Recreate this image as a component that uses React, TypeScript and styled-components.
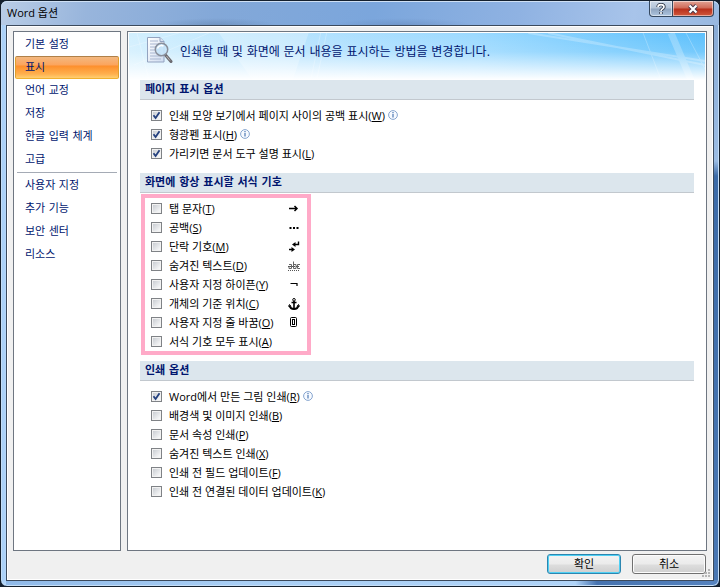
import React, { useState } from "react";
import styled, { createGlobalStyle, css } from "styled-components";

const GlobalStyle = createGlobalStyle`
  * { box-sizing: border-box; }
  body {
    margin: 0;
    background: #14202e;
    font-family: "Open Sans", "Noto Sans CJK KR", sans-serif;
    font-size: 11px;
    line-height: 19px;
    color: #000;
  }
  button, input { font: inherit; }
`;

const headingFont = `"DejaVu Sans", "Noto Sans CJK KR", sans-serif`;

const Frame = styled.div`
  display: flex;
  flex-direction: column;
  min-height: 100vh;
  padding: 0 5px 5px;
  border: 1px solid #14202e;
  border-radius: 7px;
  background:
    linear-gradient(to right, #a5cdf5 0, #b3d6fa 5px, transparent 5px),
    linear-gradient(to right, #8fb9e8 0%, #a9cff5 34%, #b0d4f8 80%, #4673b0 83%, #5583bf 100%) bottom / 100% 6px no-repeat,
    linear-gradient(to bottom, #86a9d4 0, #9bbce3 160px, #3c6ba8 175px, #4a78b4 100%);
  box-shadow: inset 0 0 0 1px #c5def7;
`;

const TitleBar = styled.header`
  display: flex;
  height: 24px;
  margin: 0 -5px;
  padding: 0 5px 0 6px;
  border-radius: 6px 6px 0 0;
  justify-content: space-between;
  align-items: flex-start;
  background:
    radial-gradient(ellipse 60px 7px at 30% 100%, rgba(80, 110, 150, 0.35), transparent),
    radial-gradient(ellipse 70px 7px at 56% 100%, rgba(80, 110, 160, 0.3), transparent),
    linear-gradient(100deg, #b9cde6 0%, #98b5dc 12%, #83a8d8 30%, #7ba6dc 52%, #8fb2e2 72%, #a8c4ea 88%, #98b8e0 100%);
  box-shadow: inset 0 1px 0 #cfe0f4;
`;

const Title = styled.h1`
  margin: 0;
  font-size: 11px;
  font-weight: 400;
  line-height: 24px;
`;

const CaptionButtons = styled.div`
  display: flex;
`;

const CaptionButton = styled.button<{ $close?: boolean }>`
  display: flex;
  align-items: center;
  justify-content: center;
  width: ${(p) => (p.$close ? 41 : 24)}px;
  height: 16px;
  padding: 0;
  border: 1px solid #35485f;
  border-top: 0;
  box-shadow: inset 0 0 0 1px rgba(255, 255, 255, 0.5);
  ${(p) =>
    p.$close
      ? css`
          border-radius: 0 0 4px 0;
          border-left: 0;
          background: linear-gradient(#e2a395 0, #cf6a58 7px, #b8301c 8px, #d0583c 100%);
        `
      : css`
          border-radius: 0 0 0 4px;
          background: linear-gradient(#cbd8e8 0, #b3c4d8 7px, #8fa5c0 8px, #adc4df 100%);
        `}
`;

const Body = styled.div`
  position: relative;
  display: flex;
  flex: 1;
  flex-direction: column;
  padding: 5px 6px;
  border: 1px solid #3c4a5c;
  background: #f0f0f0;
  box-shadow: inset 0 0 0 1px #fff;
`;

const ResizeGrip = styled.svg`
  position: absolute;
  right: 2px;
  bottom: 2px;
`;

const Columns = styled.div`
  display: flex;
  flex: 1;
  gap: 6px;
`;

const Sidebar = styled.nav`
  flex: 0 0 108px;
  padding: 1px;
  border: 1px solid #6e7681;
  background: #fff;
  font-family: ${headingFont};
`;

const NavButton = styled.button<{ $active?: boolean }>`
  display: block;
  width: 100%;
  height: 23px;
  padding: 0 9px;
  border: 1px solid transparent;
  border-radius: 2px;
  background: transparent;
  color: #00156e;
  line-height: 21px;
  text-align: left;
  ${(p) =>
    p.$active &&
    css`
      border-color: #b08048 #e0a02c #f0b030;
      background: linear-gradient(#f3b880 0, #fca45c 8px, #fd8f2c 9px, #ffb04e 17px, #ffcf70 100%);
    `}
`;

const Divider = styled.hr`
  height: 1px;
  margin: 1px 2px;
  border: 0;
  background: #a5abb5;
`;

const Panel = styled.main`
  flex: 1;
  min-width: 0;
  padding: 1px;
  border: 1px solid #6e7681;
  background: #fff;
`;

const Banner = styled.div`
  display: grid;
  height: 47px;
  > * { grid-area: 1 / 1; }
`;

const BannerArt = styled.svg`
  width: 100%;
  height: 47px;
`;

const BannerContent = styled.div`
  display: flex;
  align-items: flex-start;
  gap: 7px;
  padding: 3px 17px;
`;

const BannerText = styled.h2`
  margin: 0;
  padding-top: 6px;
  color: #00156e;
  font-family: ${headingFont};
  font-size: 12px;
  font-weight: 400;
  line-height: 20px;
`;

const Sections = styled.div`
  padding: 0 11px;
`;

const SectionTitle = styled.h3`
  height: 20px;
  margin: 0;
  padding: 0 5px;
  border-bottom: 1px solid #c2c8ce;
  background: #dce6ed;
  color: #00156e;
  font-family: ${headingFont};
  font-size: 11px;
  font-weight: 700;
  line-height: 19px;
`;

const OptionList = styled.div<{ $marked?: boolean }>`
  padding: 6px 11px 10px;
  ${(p) =>
    p.$marked &&
    css`
      width: 170px;
      margin: 1px 1px 6px;
      padding: 1px 6px 0;
      border: 4px solid #ffaac8;
    `}
`;

const OptionRow = styled.div`
  display: flex;
  align-items: center;
  height: 19px;
`;

const OptionLabel = styled.label`
  display: flex;
  align-items: center;
  gap: 7px;
  white-space: nowrap;
`;

const TickBox = styled.span`
  display: grid;
  width: 11px;
  height: 11px;
  > * { grid-area: 1 / 1; }
  > svg { pointer-events: none; }
`;

const TickInput = styled.input`
  width: 11px;
  height: 11px;
  margin: 0;
  border: 1px solid #7f8286;
  appearance: none;
  background: linear-gradient(135deg, #c3c7cd, #f4f5f6 80%);
  box-shadow: inset 0 0 0 1px #f2f2f2;
`;

const SymbolCell = styled.span`
  display: flex;
  justify-content: center;
  width: 14px;
  margin-left: auto;
`;

const InfoIcon = styled.svg`
  margin: 0 0 2px 3px;
`;

const Footer = styled.footer`
  display: flex;
  justify-content: flex-end;
  gap: 11px;
  padding: 3px 1px 1px 0;
`;

const DialogButton = styled.button<{ $primary?: boolean }>`
  width: 74px;
  height: 20px;
  padding: 0;
  border: 1px solid ${(p) => (p.$primary ? "#2c86b0" : "#707070")};
  border-radius: 3px;
  background: linear-gradient(#f3f3f3 0, #ebebeb 9px, #dddddd 10px, #cfcfcf 100%);
  box-shadow: inset 0 0 0 1px ${(p) => (p.$primary ? "#4fd0f4" : "#fcfcfc")};
  color: #000;
  line-height: 18px;
`;

const symbols: Record<string, React.ReactNode> = {
  tab: <path d="M2 5.500h7M7.500 3 10 5.500 7.500 8" fill="none" stroke="#000" strokeWidth="1.500" />,
  space: <path d="M2.500 5h2v2h-2zM6 5h2v2H6zM9.500 5h2v2h-2z" />,
  paragraph: (
    <>
      <path d="M11.500.5v3H7" fill="none" stroke="#000" strokeWidth="1.400" />
      <path d="M8.500 1 5 3.500 8.500 6zM4.500 6 8 8.500 4.500 11z" />
      <path d="M2 8.500h4" stroke="#000" strokeWidth="1.500" />
    </>
  ),
  hidden: (
    <>
      <path
        d="M2 4.500h2.500v4H2v-2h2.500M6.500 1.500v7H9v-4H6.500M13 4.500h-2.500v4H13"
        fill="none"
        stroke="#666"
      />
      <path d="M1 6.500h12M1 10.500h12" stroke="#555" strokeDasharray="1 1" />
    </>
  ),
  hyphen: <path d="M3.500 4.500H10V7" fill="none" stroke="#000" strokeWidth="1.200" />,
  anchor: (
    <g fill="none" stroke="#000">
      <circle cx="7" cy="1.800" r="1.300" />
      <path d="M7 3v8M4.500 4.500h5" strokeWidth="1.600" />
      <path d="M2.500 7.500C3 10 5 11 7 11s4-1 4.500-3.500" strokeWidth="1.800" />
      <path d="M1.500 8.500l1-2 1.500 2M10 8.500l1.500-2 1 2" />
    </g>
  ),
  box: (
    <g fill="none" stroke="#000">
      <rect x="3.500" y=".5" width="6" height="9" rx="1" />
      <rect x="5.500" y="2.500" width="2" height="5" />
    </g>
  ),
};

const Info = () => (
  <InfoIcon width="10" height="10" viewBox="0 0 10 10" role="img" aria-label="정보">
    <circle cx="5" cy="5" r="4.400" fill="#f7faff" stroke="#7b9cc9" strokeWidth=".9" />
    <path d="M5 2v1.200M5 4v3.500" stroke="#3f6cab" strokeWidth="1.100" />
  </InfoIcon>
);

type OptionData = { text: string; hotkey: string; checked?: boolean; info?: boolean; symbol?: string };

function Option({ text, hotkey, checked = false, info, symbol }: OptionData) {
  const [on, setOn] = useState(checked);
  return (
    <OptionRow>
      <OptionLabel>
        <TickBox>
          <TickInput type="checkbox" checked={on} onChange={() => setOn(!on)} />
          {on && (
            <svg width="11" height="11" viewBox="0 0 11 11">
              <path d="M2.500 5.200 4.600 8 8.500 2.300" fill="none" stroke="#24407e" strokeWidth="1.800" />
            </svg>
          )}
        </TickBox>
        <span>
          {text}(<u>{hotkey}</u>)
        </span>
      </OptionLabel>
      {info && <Info />}
      {symbol && (
        <SymbolCell>
          <svg width="14" height="12" viewBox="0 0 14 12" aria-hidden="true">{symbols[symbol]}</svg>
        </SymbolCell>
      )}
    </OptionRow>
  );
}

const sections: { title: string; marked?: boolean; options: OptionData[] }[] = [
  {
    title: "페이지 표시 옵션",
    options: [
      { text: "인쇄 모양 보기에서 페이지 사이의 공백 표시", hotkey: "W", checked: true, info: true },
      { text: "형광펜 표시", hotkey: "H", checked: true, info: true },
      { text: "가리키면 문서 도구 설명 표시", hotkey: "L", checked: true },
    ],
  },
  {
    title: "화면에 항상 표시할 서식 기호",
    marked: true,
    options: [
      { text: "탭 문자", hotkey: "T", symbol: "tab" },
      { text: "공백", hotkey: "S", symbol: "space" },
      { text: "단락 기호", hotkey: "M", symbol: "paragraph" },
      { text: "숨겨진 텍스트", hotkey: "D", symbol: "hidden" },
      { text: "사용자 지정 하이픈", hotkey: "Y", symbol: "hyphen" },
      { text: "개체의 기준 위치", hotkey: "C", symbol: "anchor" },
      { text: "사용자 지정 줄 바꿈", hotkey: "O", symbol: "box" },
      { text: "서식 기호 모두 표시", hotkey: "A" },
    ],
  },
  {
    title: "인쇄 옵션",
    options: [
      { text: "Word에서 만든 그림 인쇄", hotkey: "R", checked: true, info: true },
      { text: "배경색 및 이미지 인쇄", hotkey: "B" },
      { text: "문서 속성 인쇄", hotkey: "P" },
      { text: "숨겨진 텍스트 인쇄", hotkey: "X" },
      { text: "인쇄 전 필드 업데이트", hotkey: "F" },
      { text: "인쇄 전 연결된 데이터 업데이트", hotkey: "K" },
    ],
  },
];

const mainPages = ["기본 설정", "표시", "언어 교정", "저장", "한글 입력 체계", "고급"];
const extraPages = ["사용자 지정", "추가 기능", "보안 센터", "리소스"];

const DocumentIcon = () => (
  <svg width="27" height="28" viewBox="0 0 27 28" aria-hidden="true">
    <defs>
      <linearGradient id="sheet" x1="0" y1="0" x2="1" y2="1">
        <stop offset="0" stopColor="#fff" />
        <stop offset="1" stopColor="#cfdcf0" />
      </linearGradient>
    </defs>
    <path d="M1.500 1.500H14l4 4V26H1.500z" fill="url(#sheet)" stroke="#93a3c0" />
    <path d="M14 1.500v4h4" fill="#dbe4f2" stroke="#93a3c0" />
    <path d="M4 5h8M4 8h11M4 11h11M4 14h11M4 17h11M4 20h11M4 23h11" stroke="#a9b6d0" />
    <path d="m19.500 19 5.500 6.500" stroke="#6c6a70" strokeWidth="3" strokeLinecap="round" />
    <path d="m20.500 20 3.500 4.500" stroke="#b9b3b0" strokeWidth="1" />
    <circle cx="15.500" cy="13.500" r="6.200" fill="#c6e4fa" fillOpacity=".9" stroke="#8a8f9b" strokeWidth="1.500" />
    <path d="M11.500 12.500a4.200 4.200 0 0 1 6-2.500" fill="none" stroke="#fff" strokeWidth="1.500" />
  </svg>
);

export default function App() {
  const [page, setPage] = useState("표시");
  const nav = (name: string) => (
    <NavButton key={name} type="button" $active={page === name} onClick={() => setPage(name)}>
      {name}
    </NavButton>
  );
  return (
    <>
      <GlobalStyle />
      <Frame>
        <TitleBar>
          <Title>Word 옵션</Title>
          <CaptionButtons>
            <CaptionButton type="button" aria-label="도움말">
              <svg width="10" height="12" viewBox="0 0 10 12">
                <path d="M2 4C2 .8 8 .8 8 4c0 2-3 1.800-3 4M5 9v2" fill="none" stroke="#333c4c" strokeWidth="3.400" />
                <path d="M2 4C2 .8 8 .8 8 4c0 2-3 1.800-3 4M5 9v2" fill="none" stroke="#fff" strokeWidth="1.600" />
              </svg>
            </CaptionButton>
            <CaptionButton type="button" $close aria-label="닫기">
              <svg width="12" height="10" viewBox="0 0 12 10">
                <path d="m2.500 1.500 7 7m0-7-7 7" stroke="#47384a" strokeWidth="4" />
                <path d="m2.500 1.500 7 7m0-7-7 7" stroke="#fff" strokeWidth="2.200" />
              </svg>
            </CaptionButton>
          </CaptionButtons>
        </TitleBar>
        <Body>
          <Columns>
            <Sidebar>
              {mainPages.map(nav)}
              <Divider />
              {extraPages.map(nav)}
            </Sidebar>
            <Panel>
              <Banner>
                <BannerArt viewBox="0 0 577 47" preserveAspectRatio="none" aria-hidden="true">
                  <defs>
                    <linearGradient id="sky" x1="0" x2="1" y1="0" y2="0">
                      <stop offset="0" stopColor="#d2effe" />
                      <stop offset=".3" stopColor="#b4e2fe" />
                      <stop offset=".6" stopColor="#9bd9ff" />
                      <stop offset="1" stopColor="#5cc0fc" />
                    </linearGradient>
                    <linearGradient id="fade" x1="0" x2="0" y1="0" y2="1">
                      <stop offset="0" stopColor="#fff" stopOpacity="0" />
                      <stop offset=".4" stopColor="#fff" stopOpacity=".15" />
                      <stop offset="1" stopColor="#fff" />
                    </linearGradient>
                  </defs>
                  <path d="M0 0h577v47H0z" fill="url(#sky)" />
                  <path d="M90 0h90l-16 47h-40z" fill="#fff" opacity=".25" />
                  <g fill="none" stroke="#fff" opacity=".25">
                    <path d="M420 0 577 32M400 0 577 28" strokeWidth="2" />
                    <path d="m515 0 18 47M558 0l19 36M192 0l-10 47M198 0l-10 47M0 14 50 0M5 32 80 0M20 47 8 0" />
                    <path d="m543 0 20 47" strokeWidth="7" />
                  </g>
                  <path d="M0 0h577v47H0z" fill="url(#fade)" />
                </BannerArt>
                <BannerContent>
                  <DocumentIcon />
                  <BannerText>인쇄할 때 및 화면에 문서 내용을 표시하는 방법을 변경합니다.</BannerText>
                </BannerContent>
              </Banner>
              <Sections>
                {sections.map((s) => (
                  <section key={s.title}>
                    <SectionTitle>{s.title}</SectionTitle>
                    <OptionList $marked={s.marked}>
                      {s.options.map((o) => (
                        <Option key={o.text} {...o} />
                      ))}
                    </OptionList>
                  </section>
                ))}
              </Sections>
            </Panel>
          </Columns>
          <Footer>
            <DialogButton type="button" $primary>확인</DialogButton>
            <DialogButton type="button">취소</DialogButton>
          </Footer>
          <ResizeGrip width="9" height="9" viewBox="0 0 9 9" aria-hidden="true">
            <path d="M6 0h2v2H6zM3 3h2v2H3zM6 3h2v2H6zM0 6h2v2H0zM3 6h2v2H3zM6 6h2v2H6z" fill="#b4b4b4" />
          </ResizeGrip>
        </Body>
      </Frame>
    </>
  );
}
